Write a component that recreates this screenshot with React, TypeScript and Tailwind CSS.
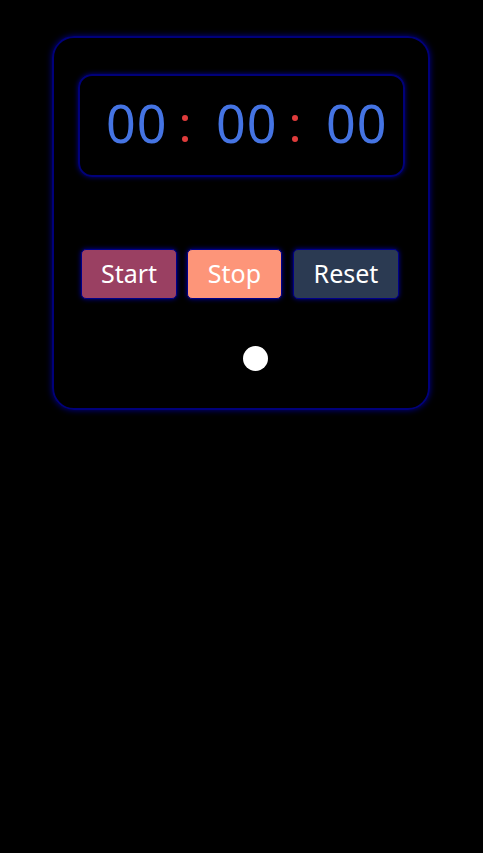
import React from "react";

const Colon = () => (
  <div className="flex flex-col items-center gap-[15px] ml-[16px] mr-[28px] mt-[10px]">
    <span className="block w-[6px] h-[6px] rounded-full bg-[#e03c3c]" />
    <span className="block w-[6px] h-[6px] rounded-full bg-[#e03c3c]" />
  </div>
);

const Digits = ({ v }: { v: string }) => (
  <span className="w-[60px] text-[52px] leading-none text-[#4574e3] tracking-[1px]">{v}</span>
);

export default function App() {
  return (
    <div className="min-h-[853px] bg-black pt-[36px]" style={{ fontFamily: '"Noto Sans", "Open Sans", sans-serif' }}>
      <div className="ml-[52px] w-[378px] h-[374px] rounded-[22px] border-2 border-[#00007a] shadow-[0_0_6px_#000090]">
        <div className="ml-[24px] mt-[36px] w-[327px] h-[103px] rounded-[14px] border-2 border-[#00007a] shadow-[0_0_5px_#000090] flex items-center pl-[26px] pb-[5px]">
          <Digits v="00" />
          <Colon />
          <Digits v="00" />
          <Colon />
          <Digits v="00" />
        </div>
        <div className="ml-[27px] mt-[72px] flex gap-[10px]">
          <button className="w-[96px] h-[50px] rounded-[5px] bg-[#9a4062] border border-[#000088] shadow-[0_0_5px_#0000a0] text-white text-[25px]">Start</button>
          <button className="w-[95px] h-[50px] rounded-[5px] bg-[#fd9579] border border-[#000088] shadow-[0_0_5px_#0000a0] text-white text-[25px] mr-[1px]">Stop</button>
          <button className="w-[106px] h-[50px] rounded-[5px] bg-[#2b3a52] border border-[#000088] shadow-[0_0_5px_#0000a0] text-white text-[25px]">Reset</button>
        </div>
        <div className="ml-[189px] mt-[47px] w-[25px] h-[25px] rounded-full bg-white" />
      </div>
    </div>
  );
}
